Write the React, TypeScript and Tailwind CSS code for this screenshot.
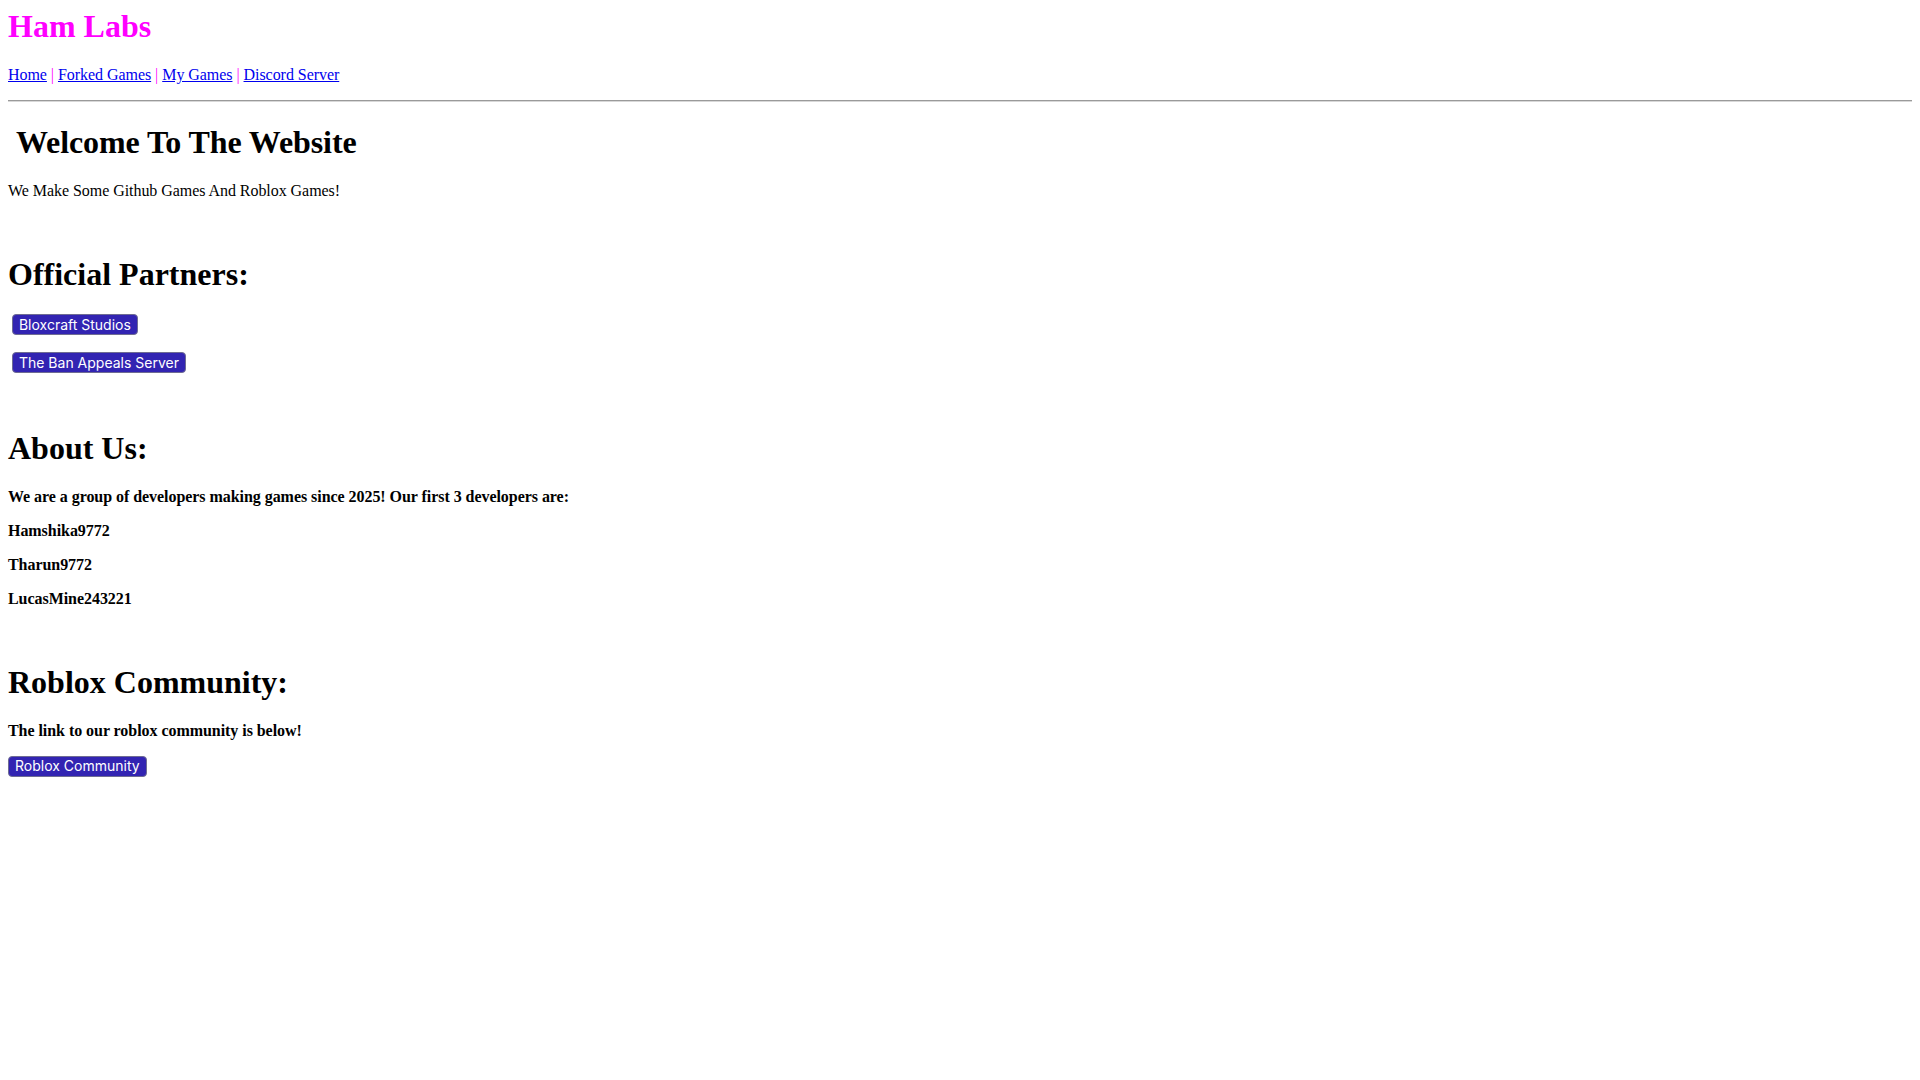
import React from "react";

function Btn({ children }: { children: React.ReactNode }) {
  return (
    <a href="#" className="inline-block align-top">
      <button className="inline-flex h-[21px] items-center rounded-[4px] border border-[#6f6c93] bg-[#3224b2] px-[6px] font-['Inter',sans-serif] text-[14px] leading-[16px] tracking-normal text-white">
        {children}
      </button>
    </a>
  );
}

export default function App() {
  const links = ["Home", "Forked Games", "My Games", "Discord Server"];
  return (
    <div className="min-h-screen bg-white p-[8px] font-['Liberation_Serif','Times_New_Roman',serif] text-[16px] leading-[18px] tracking-[-0.05px] text-black">
      <h1 className="mt-0 mb-[21.44px] text-[32px] leading-[37px] tracking-normal font-bold text-[#ff00ff]">Ham Labs</h1>
      <p className="my-[16px]">
        {links.map((l, i) => (
          <React.Fragment key={l}>
            {i > 0 && <span className="text-[#ff00ff]"> | </span>}
            <a href="#" className="text-[#0000ee] underline">
              {l}
            </a>
          </React.Fragment>
        ))}
      </p>
      <div className="my-[8px] border-t border-b border-t-[#9a9a9a] border-b-[#d8d8d8]" />
      <h1 className="my-[21.44px] text-[32px] leading-[37px] tracking-[-0.1px] font-bold">{"\u00A0Welcome To The Website"}</h1>
      <p className="my-[16px]">We Make Some Github Games And Roblox Games!</p>
      <br />
      <h1 className="my-[21.44px] text-[32px] leading-[37px] tracking-normal font-bold">Official Partners:</h1>
      <p className="my-[16px] h-[22px]">
        {"\u00A0"}
        <Btn>Bloxcraft Studios</Btn>
      </p>
      <p className="my-[16px] h-[22px]">
        {"\u00A0"}
        <Btn>The Ban Appeals Server</Btn>
      </p>
      <br />
      <h1 className="my-[21.44px] text-[32px] leading-[37px] tracking-normal font-bold">About Us:</h1>
      <p className="my-[16px] font-bold">We are a group of developers making games since 2025! Our first 3 developers are:</p>
      <p className="my-[16px] font-bold">Hamshika9772</p>
      <p className="my-[16px] font-bold">Tharun9772</p>
      <p className="my-[16px] font-bold">LucasMine243221</p>
      <br />
      <h1 className="my-[21.44px] text-[32px] leading-[37px] tracking-normal font-bold">Roblox Community:</h1>
      <p className="my-[16px] font-bold">The link to our roblox community is below!</p>
      <p className="my-[16px] h-[22px]">
        <Btn>Roblox Community</Btn>
      </p>
    </div>
  );
}
